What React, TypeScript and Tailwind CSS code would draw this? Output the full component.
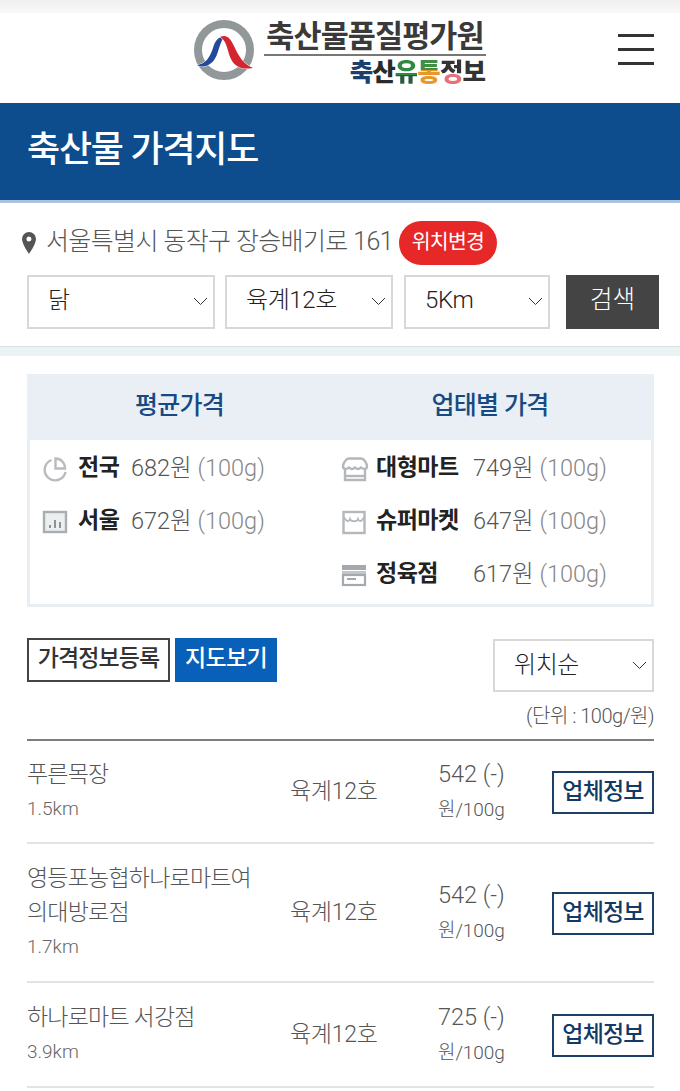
import React from "react";

const F = { fontFamily: 'Roboto, "Noto Sans CJK KR", "Noto Sans", sans-serif' };

function Chevron() {
  return (
    <svg width="15" height="9" viewBox="0 0 15 9" fill="none" stroke="#333" strokeWidth="1" className="shrink-0">
      <path d="M1 1l6.5 6.5L14 1" />
    </svg>
  );
}

function Select({ label, w, box = "h-[54px]", text = "pb-[3px]" }: { label: string; w: string; box?: string; text?: string }) {
  return (
    <div className={`${w} ${box} pl-[19px] pr-[5px] pb-[1px] border-2 border-[#d8d8d8] bg-white flex items-center justify-between text-[24px] text-[#222] font-light`}>
      <span className={`${text} tracking-[-0.4px]`}>{label}</span>
      <Chevron />
    </div>
  );
}

function Logo() {
  return (
    <div className="flex items-start gap-[10px]">
      <svg width="62" height="62" viewBox="0 0 62 62" className="mt-[7px] ml-[-1px] shrink-0">
        <circle cx="31" cy="30" r="26" fill="none" stroke="#92979a" strokeWidth="8" />
        <path d="M4 45C13 44 17 37 20 28C22 21 25 17 31 16.500C28 21 26.500 27 24.500 33C22 42 13 50 4 45Z" fill="#23489c" stroke="#fff" strokeWidth="1" style={{ paintOrder: "stroke" }} />
        <path d="M27 17C33 14 37 17 41 26C45 35 50 44 60 48C49 50 41 47 37 37C34 28 33 20 27 17Z" fill="#d3262e" stroke="#fff" strokeWidth="1" style={{ paintOrder: "stroke" }} />
      </svg>
      <div className="w-[222px] flex flex-col items-end ml-[-1px]">
        <div className="w-full text-[30.5px] leading-[36px] mt-[6px] font-bold text-[#3a3a3a] tracking-[-0.9px] whitespace-nowrap text-center">축산물품질평가원</div>
        <div className="w-full h-[2px] bg-[#777] mt-[-1px]" />
        <div className="text-[25.5px] leading-[32px] font-black tracking-[-0.9px] whitespace-nowrap mr-[1px]">
          <span className="text-[#1d3f6e]">축</span>
          <span className="text-[#2b2b2b]">산</span>
          <span className="bg-gradient-to-b from-[#2e8b3d] from-60% to-[#2a5a40] to-60% bg-clip-text text-transparent">유</span>
          <span className="bg-gradient-to-b from-[#3f8f45] from-45% to-[#e8982a] to-45% bg-clip-text text-transparent">통</span>
          <span className="bg-gradient-to-b from-[#333] from-55% to-[#e8707a] to-55% bg-clip-text text-transparent">정</span>
          <span className="text-[#333]">보</span>
        </div>
      </div>
    </div>
  );
}

function IconPie() {
  return (
    <svg width="26" height="26" viewBox="0 0 26 26" fill="none" stroke="#b8bcbf" strokeWidth="2.4">
      <path d="M9.5 4A10.5 10.5 0 1 0 23.5 16" />
      <path d="M13.5 2.5A9.5 9.5 0 0 1 23 12.5H13.5Z" />
    </svg>
  );
}
function IconChart() {
  return (
    <svg width="26" height="26" viewBox="0 0 26 26" fill="none" stroke="#a9aeb1" strokeWidth="2.4">
      <rect x="2" y="3" width="22" height="20" fill="#eceef0" />
      <path d="M8 19v-3M13 19v-8M18 19v-6" strokeWidth="2" stroke="#8d9296" />
    </svg>
  );
}
function IconStore1() {
  return (
    <svg width="28" height="26" viewBox="0 0 28 26" fill="none" stroke="#b4b8bb" strokeWidth="2.4">
      <path d="M8 2.5h12c3 0 6 5 6 8 0 3-4 3-6 1-2 2-4 2-6 0-2 2-4 2-6 0-2 2-6 2-6-1 0-3 3-8 6-8Z" />
      <path d="M4 13v11h20V13" />
      <path d="M4 20h20" />
    </svg>
  );
}
function IconStore2() {
  return (
    <svg width="26" height="26" viewBox="0 0 26 26" fill="none" stroke="#b4b8bb" strokeWidth="2.4">
      <rect x="2.5" y="3" width="21" height="21" />
      <path d="M3 8c2 5 5 5 6 2 1 3 7 3 8 0 1 3 4 3 6-2" strokeWidth="1.8" />
    </svg>
  );
}
function IconStore3() {
  return (
    <svg width="26" height="26" viewBox="0 0 26 26" fill="none">
      <rect x="1" y="3" width="24" height="5" fill="#a5a9ad" />
      <rect x="1" y="9" width="24" height="4" fill="#c4c7ca" />
      <rect x="2" y="13" width="22" height="10" stroke="#a5a9ad" strokeWidth="2.2" />
      <path d="M6 17h9" stroke="#a5a9ad" strokeWidth="2" />
    </svg>
  );
}

function Stat({ icon, name, price, nameW, iconW }: { icon: React.ReactNode; name: string; price: string; nameW: string; iconW: string }) {
  return (
    <div className="h-[53px] flex items-center whitespace-nowrap">
      <div className={`${iconW} shrink-0 flex`}>{icon}</div>
      <div className={`${nameW} shrink-0 text-[23px] font-bold text-[#222] tracking-[-0.5px]`}>{name}</div>
      <div className="text-[23.5px] text-[#555] font-light">
        {price}원 <span className="text-[#888]">(100g)</span>
      </div>
    </div>
  );
}

function Row({ name, km, price, h }: { name: React.ReactNode; km: string; price: string; h: string }) {
  return (
    <div className={`${h} border-b-2 border-[#e3e3e3] flex items-center`}>
      <div className="w-[263px] shrink-0 pb-[3px]">
        <div className="text-[23px] leading-[34px] text-[#555] font-light tracking-[-0.8px]">{name}</div>
        <div className="text-[19px] leading-[26px] mt-[4px] text-[#666] font-light">{km}</div>
      </div>
      <div className="w-[148px] shrink-0 pt-[2px] text-[23px] text-[#555] font-light tracking-[-0.3px] whitespace-nowrap">육계12호</div>
      <div className="w-[114px] shrink-0 whitespace-nowrap text-[#555] font-light pb-[2px]">
        <div className="text-[23.5px] leading-[30px]">{price} (-)</div>
        <div className="text-[19px] leading-[26px] mt-[8px] tracking-[-0.1px]">원/100g</div>
      </div>
      <div className="w-[102px] h-[43px] mt-[1px] shrink-0 border-2 border-[#1c3f66] flex items-center justify-center text-[23px] font-medium text-[#123a66] tracking-[-0.8px] whitespace-nowrap">
        <span>업체정보</span>
      </div>
    </div>
  );
}

export default function App() {
  return (
    <div style={F} className="w-[680px] h-[1091px] overflow-hidden bg-white">
      <div className="h-[13px] bg-gradient-to-b from-[#efefef] to-[#f8f8f8]" />
      <header className="h-[90px] flex items-start pl-[194px] pr-[26px] justify-between">
        <Logo />
        <div className="w-[36px] mt-[21px] flex flex-col gap-[11px]">
          <div className="h-[3px] bg-[#333]" />
          <div className="h-[3px] bg-[#333]" />
          <div className="h-[3px] bg-[#333]" />
        </div>
      </header>
      <div className="h-[97px] bg-[#0d4d8e] flex items-center pl-[27px] pb-[3px] text-white text-[36px] font-medium tracking-[-1.2px]">
        축산물 가격지도
      </div>
      <div className="h-[3px] bg-[#a9c3e0]" />
      <section className="h-[144px] border-b border-[#d8e0e0] pt-[18px]">
        <div className="h-[44px] flex items-center pl-[22px] whitespace-nowrap">
          <svg width="14" height="22" viewBox="0 0 14 22" className="shrink-0">
            <path fillRule="evenodd" d="M7 0a7 7 0 0 1 7 7c0 5-7 15-7 15S0 12 0 7a7 7 0 0 1 7-7Zm0 4.5a2.5 2.5 0 1 0 0 5 2.5 2.5 0 0 0 0-5Z" fill="#555" />
          </svg>
          <span className="ml-[10px] pb-[2px] text-[25px] text-[#555] font-light tracking-[-0.63px]">서울특별시 동작구 장승배기로 161</span>
          <span className="ml-[6px] w-[98px] h-[44px] rounded-full bg-[#e62828] text-white text-[20.5px] pb-[1px] flex items-center justify-center tracking-[-0.8px]">위치변경</span>
        </div>
        <div className="flex items-center mt-[10px] pl-[27px]">
          <Select label="닭" w="w-[188px]" />
          <div className="w-[10px]" />
          <Select label="육계12호" w="w-[168px]" />
          <div className="w-[11px]" />
          <Select label="5Km" w="w-[146px]" />
          <div className="ml-[16px] w-[93px] h-[54px] bg-[#444] text-white text-[24.5px] pb-[4px] font-light flex items-center justify-center">검색</div>
        </div>
      </section>
      <div className="h-[9px] bg-[#e9f3f5]" />
      <section className="ml-[27px] mt-[18px] w-[627px] h-[233px] border-[3px] border-t-0 border-[#e9eef3]">
        <div className="h-[66px] bg-[#e9eff5] flex items-center pb-[2px] text-[25px] font-medium text-[#174a80] tracking-[-0.7px] whitespace-nowrap mx-[-3px]">
          <div className="w-[305px] text-center">평균가격</div>
          <div className="w-[316px] text-center">업태별 가격</div>
        </div>
        <div className="flex pt-[2px]">
          <div className="w-[311px] pl-[12px]">
            <Stat icon={<IconPie />} name="전국" price="682" nameW="w-[53px]" iconW="w-[36px]" />
            <Stat icon={<IconChart />} name="서울" price="672" nameW="w-[53px]" iconW="w-[36px]" />
          </div>
          <div>
            <Stat icon={<IconStore1 />} name="대형마트" price="749" nameW="w-[97px]" iconW="w-[35px]" />
            <Stat icon={<IconStore2 />} name="슈퍼마켓" price="647" nameW="w-[97px]" iconW="w-[35px]" />
            <Stat icon={<IconStore3 />} name="정육점" price="617" nameW="w-[97px]" iconW="w-[35px]" />
          </div>
        </div>
      </section>
      <section className="pl-[27px] pr-[26px]">
        <div className="mt-[31px] flex items-start">
          <div className="w-[143px] h-[44px] pb-[1px] border-2 border-[#444] flex items-center justify-center text-[23px] font-medium text-[#333] tracking-[-0.9px] whitespace-nowrap">가격정보등록</div>
          <div className="ml-[5px] w-[102px] h-[44px] pb-[1px] bg-[#0860b8] flex items-center justify-center text-[23px] font-medium text-white tracking-[-0.6px] whitespace-nowrap">지도보기</div>
          <div className="ml-auto">
            <Select label="위치순" w="w-[161px]" box="h-[53px] mt-[1px]" text="pb-0" />
          </div>
        </div>
        <div className="mt-[11px] text-right text-[20px] leading-[26px] text-[#555] font-light tracking-[-0.5px]">(단위 : 100g/원)</div>
        <div className="h-[2px] bg-[#7b7f83] mt-[10px]" />
        <Row h="h-[103px]" name="푸른목장" km="1.5km" price="542" />
        <Row h="h-[139px]" name={<>영등포농협하나로마트여<br />의대방로점</>} km="1.7km" price="542" />
        <Row h="h-[105px]" name="하나로마트 서강점" km="3.9km" price="725" />
      </section>
    </div>
  );
}
